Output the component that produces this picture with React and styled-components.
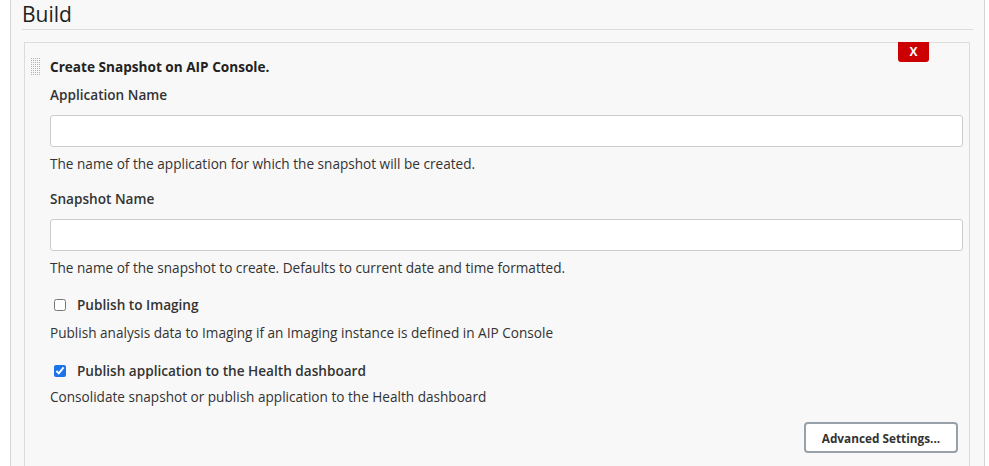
import styled, { createGlobalStyle } from "styled-components";

const GlobalStyle = createGlobalStyle`
  html, body {
    margin: 0;
    padding: 0;
    background: #fff;
  }
  body {
    font-family: "Open Sans", "Noto Sans", sans-serif;
    color: #333;
  }
`;

const Page = styled.div`
  width: 989px;
  height: 466px;
  overflow: hidden;
  box-sizing: border-box;
  padding-left: 10px;
  padding-right: 4px;
`;

const Section = styled.section`
  height: 100%;
  box-sizing: border-box;
  border-left: 1px solid #d3d3d3;
  border-right: 1px solid #d3d3d3;
  background: #f8f8f8;
  padding: 0 11px;
`;

const Heading = styled.h2`
  margin: 0;
  padding-top: 1px;
  padding-bottom: 2px;
  font-size: 21px;
  font-weight: 400;
  line-height: 26px;
  color: #1f1f1f;
  border-bottom: 1px solid #dcdcdc;
`;

const Step = styled.div`
  position: relative;
  margin-top: 12px;
  margin-left: 2px;
  margin-right: 3px;
  border: 1px solid #dcdcdc;
  border-bottom: none;
  padding: 14px 6px 0 25px;
  min-height: 430px;
`;

const Handle = styled.div`
  position: absolute;
  left: 5px;
  top: 14px;
  width: 11px;
  height: 19px;
  background-color: #b3b3b3;
  background-image:
    linear-gradient(to right, #f8f8f8 1px, transparent 1px),
    linear-gradient(to bottom, #f8f8f8 1px, transparent 1px);
  background-size: 2px 2px;
`;

const DeleteButton = styled.button`
  position: absolute;
  top: -1px;
  right: 40px;
  width: 31px;
  height: 20px;
  border: none;
  border-radius: 0 0 3px 3px;
  background: #cc0000;
  color: #fff;
  font-family: "Open Sans", sans-serif;
  font-weight: 700;
  font-size: 12px;
  line-height: 20px;
  padding: 0;
  cursor: pointer;
`;

const StepTitle = styled.div`
  font-size: 13.6px;
  font-weight: 700;
  line-height: 20px;
  color: #222;
`;

const Field = styled.div`
  margin-top: ${(p) => p.$gap || 0}px;
`;

const Label = styled.label`
  display: block;
  font-size: 13.6px;
  font-weight: 600;
  line-height: 18px;
  color: #333;
`;

const TextInput = styled.input`
  display: block;
  box-sizing: border-box;
  width: 100%;
  height: 32px;
  margin-top: 11px;
  border: 1px solid #ccc;
  border-radius: 3px;
  background: #fff;
  font: inherit;
`;

const Help = styled.div`
  font-size: 13.6px;
  line-height: 18px;
  color: #333;
  margin-top: ${(p) => p.$gap || 8}px;
`;

const CheckRow = styled.label`
  display: flex;
  align-items: center;
  gap: 11px;
  padding-left: 4px;
  font-size: 13.6px;
  font-weight: 600;
  line-height: 18px;
  color: #333;
`;

const Check = styled.input`
  margin: 0;
  width: 12px;
  height: 12px;
  accent-color: #1a73e8;
`;

const Footer = styled.div`
  display: flex;
  justify-content: flex-end;
  margin-top: 16px;
  padding-right: 5px;
`;

const AdvancedButton = styled.button`
  width: 154px;
  height: 31px;
  border: 2px solid #98a1aa;
  border-radius: 4px;
  background: #fff;
  color: #333;
  font-family: "Open Sans", sans-serif;
  font-size: 11.8px;
  font-weight: 700;
  cursor: pointer;
`;

export default function App() {
  return (
    <>
      <GlobalStyle />
      <Page>
        <Section>
          <Heading>Build</Heading>
          <Step>
            <Handle />
            <DeleteButton>X</DeleteButton>
            <StepTitle>Create Snapshot on AIP Console.</StepTitle>
            <Field $gap={9}>
              <Label>Application Name</Label>
              <TextInput type="text" />
              <Help $gap={8}>The name of the application for which the snapshot will be created.</Help>
            </Field>
            <Field $gap={17}>
              <Label>Snapshot Name</Label>
              <TextInput type="text" />
              <Help $gap={8}>The name of the snapshot to create. Defaults to current date and time formatted.</Help>
            </Field>
            <Field $gap={19}>
              <CheckRow>
                <Check type="checkbox" />
                Publish to Imaging
              </CheckRow>
              <Help $gap={10}>Publish analysis data to Imaging if an Imaging instance is defined in AIP Console</Help>
            </Field>
            <Field $gap={20}>
              <CheckRow>
                <Check type="checkbox" defaultChecked />
                Publish application to the Health dashboard
              </CheckRow>
              <Help $gap={8}>Consolidate snapshot or publish application to the Health dashboard</Help>
            </Field>
            <Footer>
              <AdvancedButton>Advanced Settings...</AdvancedButton>
            </Footer>
          </Step>
        </Section>
      </Page>
    </>
  );
}
